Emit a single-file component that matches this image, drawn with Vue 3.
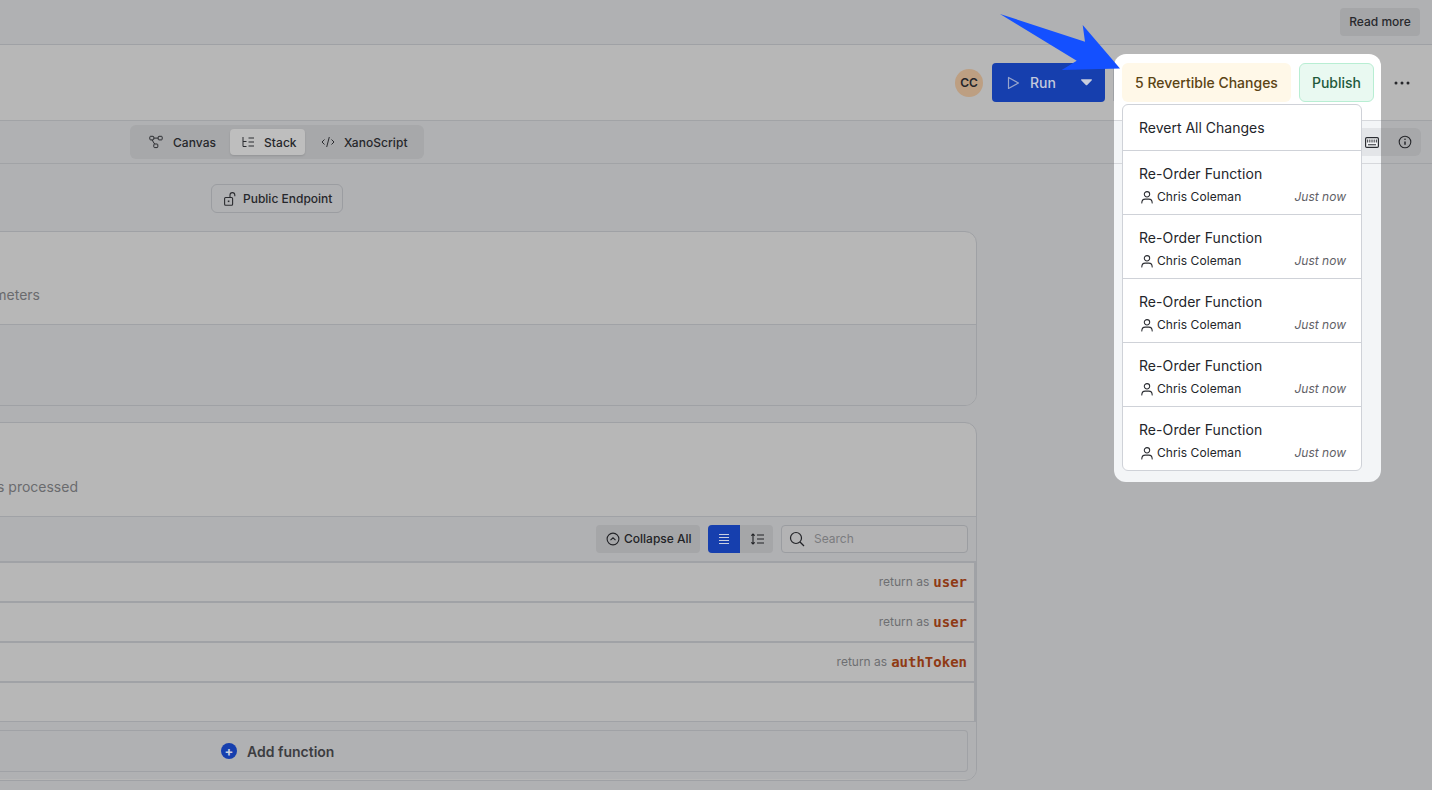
<script setup>
const changes = Array.from({ length: 5 }, (_, i) => i)
const rows = [
  { ret: 'user' },
  { ret: 'user' },
  { ret: 'authToken' },
  { ret: '' }
]
</script>

<template>
  <div class="page">
    <div class="notice">
      <button class="read">Read more</button>
    </div>

    <header class="head">
      <div class="avatar">CC</div>
      <div class="run">
        <svg class="play" width="13" height="14" viewBox="0 0 13 14" fill="none" stroke="#97a4cc" stroke-width="1.200"><path d="M1.500 1.500v11l10-5.500z" stroke-linejoin="round"/></svg>
        <span>Run</span>
        <svg class="caret" width="11" height="7" viewBox="0 0 12 7"><path d="M.6 0h10.800c.5 0 .8.6.4 1L6.500 6.400c-.3.3-.7.3-1 0L.2 1c-.4-.4-.1-1 .4-1z" fill="currentColor"/></svg>
      </div>
      <i class="rule"></i>
      <div class="spot-anchor">
        <div class="spot">
          <div class="strip left"></div>
          <div class="strip right">
            <div class="strip-ctl"></div>
          </div>
        </div>
        <button class="revert">5 Revertible Changes</button>
        <button class="publish">Publish</button>
        <div class="menu">
          <div class="menu-all">Revert All Changes</div>
          <div v-for="c in changes" :key="c" class="menu-item">
            <div class="menu-title">Re-Order Function</div>
            <div class="menu-meta">
              <svg width="14" height="14" viewBox="0 0 14 14" fill="none" stroke="#2a2c31" stroke-width="1.050"><circle cx="7" cy="4.300" r="2.700"/><path d="M1.800 13c0-2.600 1.600-3.900 3.400-3.900h3.600c1.800 0 3.400 1.300 3.400 3.900" stroke-linecap="round"/></svg>
              <span class="who">Chris Coleman</span>
              <em>Just now</em>
            </div>
          </div>
        </div>
        <svg class="kbd" width="14" height="11" viewBox="0 0 14 11" fill="none"><rect x=".6" y=".6" width="12.800" height="9.800" rx="1.200" fill="#f3f4f6" stroke="#2a2c31" stroke-width="1.200"/><path d="M2.500 2.500v3M4.300 2.500v3M6.100 2.500v3M7.900 2.500v3M9.700 2.500v3M11.500 2.500v3" stroke="#55575c"/><path d="M3 7.700h8" stroke="#55575c" stroke-width="1.300"/></svg>
      </div>
      <svg class="dots" width="16" height="4" viewBox="0 0 16 4"><circle cx="2" cy="2" r="1.500"/><circle cx="8" cy="2" r="1.500"/><circle cx="14" cy="2" r="1.500"/></svg>
    </header>

    <nav class="tools">
      <div class="seg">
        <span class="seg-item">
          <svg width="14" height="14" viewBox="0 0 14 14" fill="none" stroke="#2b2c30" stroke-width="1"><rect x=".8" y="1.300" width="4" height="3.600" rx=".8"/><rect x="9.200" y="1.300" width="4" height="3.600" rx=".8"/><rect x="4.800" y="9" width="4" height="3.600" rx=".8"/><path d="M4.800 3.100h4.400M3 4.900l2.600 4.100"/></svg>
          Canvas
        </span>
        <span class="seg-item on">
          <svg width="14" height="14" viewBox="0 0 14 14" fill="none" stroke="#2b2c30" stroke-width="1"><path d="M2 2v9.500h3.500M2 6.500h3.500M7.500 3h5.500M7.500 7h5.500M7.500 11h5.500"/></svg>
          Stack
        </span>
        <span class="seg-item">
          <svg width="14" height="14" viewBox="0 0 14 14" fill="none" stroke="#2b2c30" stroke-width="1"><path d="M3.500 4.500 1 7l2.500 2.500M10.500 4.500 13 7l-2.500 2.500M8.300 2 5.700 12"/></svg>
          XanoScript
        </span>
      </div>
      <div class="side">
        <svg class="info" width="14" height="14" viewBox="0 0 14 14" fill="none" stroke="#26272b" stroke-width="1.100"><circle cx="7" cy="7" r="5.800"/><path d="M7 6.500v3.300" stroke-width="1.500"/><circle cx="7" cy="4.300" r=".8" fill="#26272b" stroke="none"/></svg>
      </div>
    </nav>

    <main class="main">
      <div class="endpoint-row">
        <button class="endpoint">
          <svg width="12" height="14" viewBox="0 0 12 14" fill="none" stroke="#2b2c30" stroke-width="1.100"><rect x=".6" y="5.500" width="8" height="7.700" rx="1"/><path d="M6 5.500V3a2.400 2.400 0 0 1 4.800 0v1.300"/><rect x="3.800" y="8.500" width="1.600" height="1.600" fill="#2b2c30" stroke="none"/></svg>
          Public Endpoint
        </button>
      </div>

      <section class="card first">
        <div class="card-top"><p class="sub params">Define the request parameters</p></div>
        <div class="card-bot"></div>
      </section>

      <section class="card second">
        <div class="card-top short"><p class="sub proc">Order of functions processed</p></div>
        <div class="list-bar">
          <button class="collapse">
            <svg width="14" height="14" viewBox="0 0 14 14" fill="none" stroke="#222327" stroke-width="1.100"><circle cx="7" cy="7" r="5.900"/><path d="M4.500 8.200 7 5.800l2.500 2.400"/></svg>
            Collapse All
          </button>
          <div class="toggle">
            <span class="tg on"><svg width="12" height="12" viewBox="0 0 12 12" stroke="#c9cfe0" stroke-width="1"><path d="M1 1.500h10M1 4.500h10M1 7.500h10M1 10.500h10"/></svg></span>
            <span class="tg"><svg width="14" height="12" viewBox="0 0 14 12" fill="none" stroke="#222327" stroke-width="1.100"><path d="M3 1v10M1.300 2.700 3 1l1.700 1.700M1.300 9.300 3 11l1.700-1.700M7 2h7M7 6h7M7 10h7"/></svg></span>
          </div>
          <div class="search">
            <svg width="16" height="16" viewBox="0 0 16 16" fill="none" stroke="#222327" stroke-width="1.200"><circle cx="7" cy="7" r="5.500"/><path d="m11 11 4 4"/></svg>
            <span>Search</span>
          </div>
        </div>
        <div v-for="(r, i) in rows" :key="i" class="row">
          <template v-if="r.ret">
            <span class="ret">return as</span>
            <code>{{ r.ret }}</code>
          </template>
        </div>
        <div class="add-wrap">
          <div class="add">
            <span class="plus">+</span>
            Add function
          </div>
        </div>
      </section>
    </main>

    <svg class="arrow" width="125" height="72" viewBox="0 0 125 72"><path d="M0 14 85 41.700 82.700 25 120 68.500 61.700 70 76.700 60.700z" fill="#1450ff"/></svg>
  </div>
</template>

<style>
html, body { margin: 0; overflow: hidden; background: #b0b1b3; }
</style>

<style scoped>
.page {
  position: relative;
  width: 1432px;
  height: 790px;
  overflow: hidden;
  background: #b0b1b3;
  font-family: Inter, "Noto Sans", sans-serif;
  font-size: 14px;
  color: #26272b;
}
button { font: inherit; color: inherit; border: 0; padding: 0; background: none; }

.notice {
  height: 44px;
  display: flex;
  align-items: center;
  justify-content: flex-end;
  padding-right: 12px;
  border-bottom: 1px solid #9fa1a5;
}
.read {
  height: 28px;
  width: 80px;
  border-radius: 4px;
  background: #a5a6a8;
  font-size: 12px;
  font-weight: 500;
  color: #28292d;
  padding-bottom: 2px;
}

.head {
  height: 75px;
  display: flex;
  align-items: center;
  padding-right: 22px;
  border-bottom: 1px solid #a1a3a6;
  background: #b7b7b7;
  justify-content: flex-end;
}
.avatar {
  width: 28px;
  height: 28px;
  border-radius: 50%;
  background: #bd9f82;
  display: flex;
  align-items: center;
  justify-content: center;
  font-size: 12px;
  font-weight: 600;
  color: #25262a;
  margin-right: 9px;
}
.run {
  width: 113px;
  height: 39px;
  box-sizing: border-box;
  display: flex;
  align-items: center;
  background: #163fae;
  border-radius: 4px;
  color: #c2c9dc;
  font-weight: 500;
  padding: 0 13px 0 15px;
}
.play { margin-right: 10px; }
.caret { margin-left: auto; color: #c9cedd; }
.rule { width: 1px; height: 36px; background: #9fa1a5; margin: 0 0 0 8px; align-self: center; }

.spot-anchor {
  position: relative;
  display: flex;
  gap: 8px;
  margin-left: 8px;
  margin-right: 20px;
}
.spot {
  position: absolute;
  left: -8px;
  top: -9px;
  width: 267px;
  height: 428px;
  border-radius: 12px;
  overflow: hidden;
  background: linear-gradient(#fff 66px, #f3f5f7 66px);
}
.strip { position: absolute; top: 66px; height: 42px; border-top: 1px solid #d6d8dc; border-bottom: 1px solid #d6d8dc; }
.strip.left { left: 0; width: 8px; }
.strip.right { left: 248px; width: 19px; }
.strip-ctl { position: absolute; left: 0; right: 0; top: 7px; height: 28px; background: #e3e5e8; }
.revert {
  position: relative;
  width: 169px;
  height: 39px;
  border-radius: 6px;
  background: #fff8e8;
  color: #5b4414;
  font-weight: 500;
}
.publish {
  position: relative;
  width: 75px;
  height: 39px;
  box-sizing: border-box;
  border-radius: 6px;
  background: #e9f9f1;
  border: 1px solid #b8eed3;
  color: #1f5a3c;
  font-weight: 500;
}
.menu {
  position: absolute;
  left: 0;
  top: 41px;
  width: 240px;
  box-sizing: border-box;
  background: #fff;
  border: 1px solid #cfd2d8;
  border-radius: 6px;
  overflow: hidden;
  color: #23252a;
}
.menu-all {
  height: 45px;
  display: flex;
  align-items: center;
  padding: 0 16px;
  font-size: 14px;
  border-bottom: 1px solid #cfd2d8;
}
.menu-item {
  height: 63px;
  border-bottom: 1px solid #cfd2d8;
  padding: 0 15px 0 16px;
}
.menu-item:last-child { border-bottom: 0; }
.menu-title { padding-top: 14px; line-height: 17px; font-size: 14px; letter-spacing: 0.005em; }
.menu-meta {
  display: flex;
  align-items: center;
  margin-top: 7px;
  line-height: 16px;
  font-size: 12px;
  padding-left: 1px;
}
.who { margin-left: 3px; letter-spacing: 0.006em; }
.menu-meta em { margin-left: auto; color: #5f6167; font-style: italic; }
.kbd { position: absolute; left: 243px; top: 74px; }

.dots { fill: #26272b; }

.tools {
  height: 42px;
  border-bottom: 1px solid #a1a3a6;
  display: flex;
  align-items: center;
  padding-left: 130px;
  padding-right: 11px;
}
.seg {
  height: 34px;
  width: 294px;
  box-sizing: border-box;
  background: #a7a8aa;
  border-radius: 6px;
  display: flex;
  align-items: center;
  padding: 0 4px 0 19px;
  font-size: 12px;
  font-weight: 500;
  letter-spacing: 0.004em;
}
.seg-item { display: flex; align-items: center; gap: 10px; height: 26px; padding-right: 14px; }
.seg-item.on {
  width: 75px;
  box-sizing: border-box;
  margin-right: 16px;
  padding: 0 0 0 11px;
  gap: 9px;
  background: #bebebe;
  border-radius: 4px;
  box-shadow: 0 1px 2px rgba(0, 0, 0, 0.12);
}
.seg-item:last-child { gap: 9px; padding-right: 0; }
.side {
  margin-left: auto;
  width: 59px;
  height: 28px;
  background: #a7a8aa;
  border-radius: 0 6px 6px 0;
  display: flex;
  align-items: center;
  justify-content: flex-end;
  padding-right: 9px;
  box-sizing: border-box;
}

.main { padding: 20px 0 0; }
.endpoint-row { padding-left: 211px; margin-bottom: 18px; }
.endpoint {
  width: 132px;
  height: 29px;
  box-sizing: border-box;
  border: 1px solid #9b9da1;
  border-radius: 6px;
  display: flex;
  align-items: center;
  gap: 7px;
  padding-left: 12px;
  font-size: 12px;
  font-weight: 500;
  color: #26272b;
}
.card {
  margin-left: -40px;
  width: 1017px;
  box-sizing: border-box;
  border: 1px solid #9fa1a5;
  border-radius: 12px;
  background: #b7b7b7;
  overflow: hidden;
}
.card.first { height: 175px; margin-bottom: 16px; }
.card-top { height: 92px; border-bottom: 1px solid #a0a2a6; position: relative; }
.card-top.short { height: 93px; }
.card-bot { height: 81px; background: #b0b1b3; }
.sub { position: absolute; margin: 0; white-space: nowrap; color: #6a6b6e; font-size: 14px; line-height: 17px; }
.params { right: 936px; top: 54px; }
.proc { right: 898px; top: 55px; }

.card.second { height: 359px; }
.list-bar {
  height: 44px;
  box-sizing: border-box;
  display: flex;
  align-items: center;
  justify-content: flex-end;
  padding: 0 8px 1px 0;
  background: #b0b1b3;
}
.collapse {
  width: 104px;
  height: 28px;
  display: flex;
  align-items: center;
  gap: 4px;
  padding-left: 10px;
  box-sizing: border-box;
  background: #a5a6a8;
  border-radius: 4px;
  font-size: 12px;
  font-weight: 500;
  color: #222327;
  margin-right: 8px;
}
.toggle { display: flex; width: 65px; height: 28px; border-radius: 4px; overflow: hidden; background: #a5a6a8; margin-right: 8px; }
.tg { flex: 1; display: flex; align-items: center; justify-content: center; }
.tg.on { background: #163fae; flex: 0 0 32px; }
.search {
  width: 187px;
  height: 28px;
  box-sizing: border-box;
  border: 1px solid #9b9da1;
  border-radius: 4px;
  display: flex;
  align-items: center;
  gap: 9px;
  padding-left: 7px;
  background: #b3b3b4;
  color: #7b7c7f;
  font-size: 12px;
}
.row {
  height: 40px;
  box-sizing: border-box;
  border-top: 2px solid #a0a2a6;
  border-right: 2px solid #a0a2a6;
  display: flex;
  align-items: center;
  justify-content: flex-end;
  gap: 4px;
  padding: 0 7px 1px 0;
}
.ret { color: #6e6f72; font-size: 12px; }
code { font-family: "DejaVu Sans Mono", monospace; font-weight: 700; font-size: 14px; color: #8f3a14; }
.add-wrap { background: #b0b1b3; height: 58px; padding: 8px 8px 0 0; border-top: 1px solid #a0a2a6; box-sizing: border-box; }
.add {
  height: 42px;
  border: 1px solid #a0a2a6;
  border-left: 0;
  box-sizing: border-box;
  border-radius: 0 4px 4px 0;
  display: flex;
  align-items: center;
  padding-left: 260px;
  gap: 10px;
  font-weight: 600;
  color: #3c3d41;
}
.plus {
  width: 16px;
  height: 16px;
  border-radius: 50%;
  background: #163fae;
  color: #c9cfe0;
  display: flex;
  align-items: center;
  justify-content: center;
  font-size: 13px;
  font-weight: 700;
  line-height: 1;
}
.arrow { position: absolute; left: 1000px; top: 0; }
</style>
